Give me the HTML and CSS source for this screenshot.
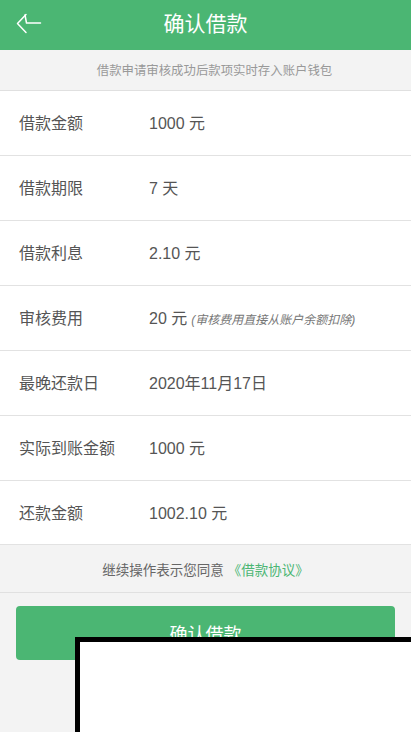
FILE: index.html
```html
<!DOCTYPE html>
<html lang="zh-CN">
<head>
<meta charset="utf-8">
<meta name="viewport" content="width=device-width, initial-scale=1">
<title>确认借款</title>
<link rel="stylesheet" href="styles.css">
</head>
<body>
<div class="page">
  <header class="topbar">
    <span class="back">
      <svg width="26" height="22" viewBox="0 0 26 22" fill="none" stroke="#fff" stroke-width="1.5" stroke-linecap="round" stroke-linejoin="round">
        <path d="M10 1.5 L1.5 10.5 L10 19.5"/>
        <path d="M9 2 L10.5 10 H24.5"/>
      </svg>
    </span>
    <h1 class="title">确认借款</h1>
  </header>
  <div class="notice">借款申请审核成功后款项实时存入账户钱包</div>
  <ul class="list">
    <li class="row"><span class="label">借款金额</span><span class="value">1000 元</span></li>
    <li class="row"><span class="label">借款期限</span><span class="value">7 天</span></li>
    <li class="row"><span class="label">借款利息</span><span class="value">2.10 元</span></li>
    <li class="row"><span class="label">审核费用</span><span class="value">20 元 <em class="note">(审核费用直接从账户余额扣除)</em></span></li>
    <li class="row"><span class="label">最晚还款日</span><span class="value">2020年11月17日</span></li>
    <li class="row"><span class="label">实际到账金额</span><span class="value">1000 元</span></li>
    <li class="row"><span class="label">还款金额</span><span class="value">1002.10 元</span></li>
  </ul>
  <div class="agree">继续操作表示您同意 <span class="link">《借款协议》</span></div>
  <div class="actions">
    <button class="btn">确认借款</button>
  </div>
  <div class="overlay"></div>
</div>
</body>
</html>
```
FILE: styles.css
```css
* { box-sizing: border-box; }
html, body {
  margin: 0;
  padding: 0;
  background: #f3f3f3;
}
body {
  font-family: "Liberation Sans", "Noto Sans CJK SC", sans-serif;
  color: #555;
}
.page {
  position: relative;
  width: 411px;
  height: 732px;
  overflow: hidden;
  background: #f3f3f3;
}
.topbar {
  height: 50px;
  background: #4bb673;
  display: flex;
  align-items: center;
  justify-content: center;
  position: relative;
}
.back {
  position: absolute;
  left: 16px;
  top: 13px;
  width: 26px;
  height: 22px;
  display: block;
}
.back svg { display: block; }
.title {
  margin: 0;
  font-size: 21px;
  font-weight: normal;
  color: #fff;
  line-height: 1;
  margin-top: -4px;
}
.notice {
  height: 41px;
  display: flex;
  align-items: center;
  justify-content: center;
  padding-left: 18px;
  font-size: 12.4px;
  color: #999;
  border-bottom: 1px solid #e0e0e0;
}
.list {
  list-style: none;
  margin: 0;
  padding: 0;
  background: #fff;
}
.row {
  height: 65px;
  display: flex;
  align-items: center;
  border-bottom: 1px solid #e2e2e2;
  font-size: 16px;
  color: #555;
  padding-left: 19px;
  padding-bottom: 2px;
}
.row:last-child { height: 64px; }
.label {
  width: 130px;
  flex: none;
}
.value {
  display: flex;
  align-items: baseline;
}
.note {
  font-size: 12px;
  font-style: italic;
  color: #777;
  margin-left: 4px;
}
.agree {
  height: 48px;
  display: flex;
  align-items: center;
  justify-content: center;
  font-size: 13.5px;
  color: #666;
  border-bottom: 1px solid #e0e0e0;
}
.link {
  color: #4bb673;
  margin-left: 4px;
}
.actions {
  padding: 13px 16px;
}
.btn {
  display: block;
  width: 100%;
  height: 54px;
  border: none;
  border-radius: 4px;
  background: #4bb673;
  color: #fff;
  font-family: "Liberation Sans", "Noto Sans CJK SC", sans-serif;
  font-size: 18px;
  padding: 0;
}
.overlay {
  position: absolute;
  left: 75px;
  top: 637px;
  width: 360px;
  height: 120px;
  background: #fff;
  border: 5px solid #000;
}
```
